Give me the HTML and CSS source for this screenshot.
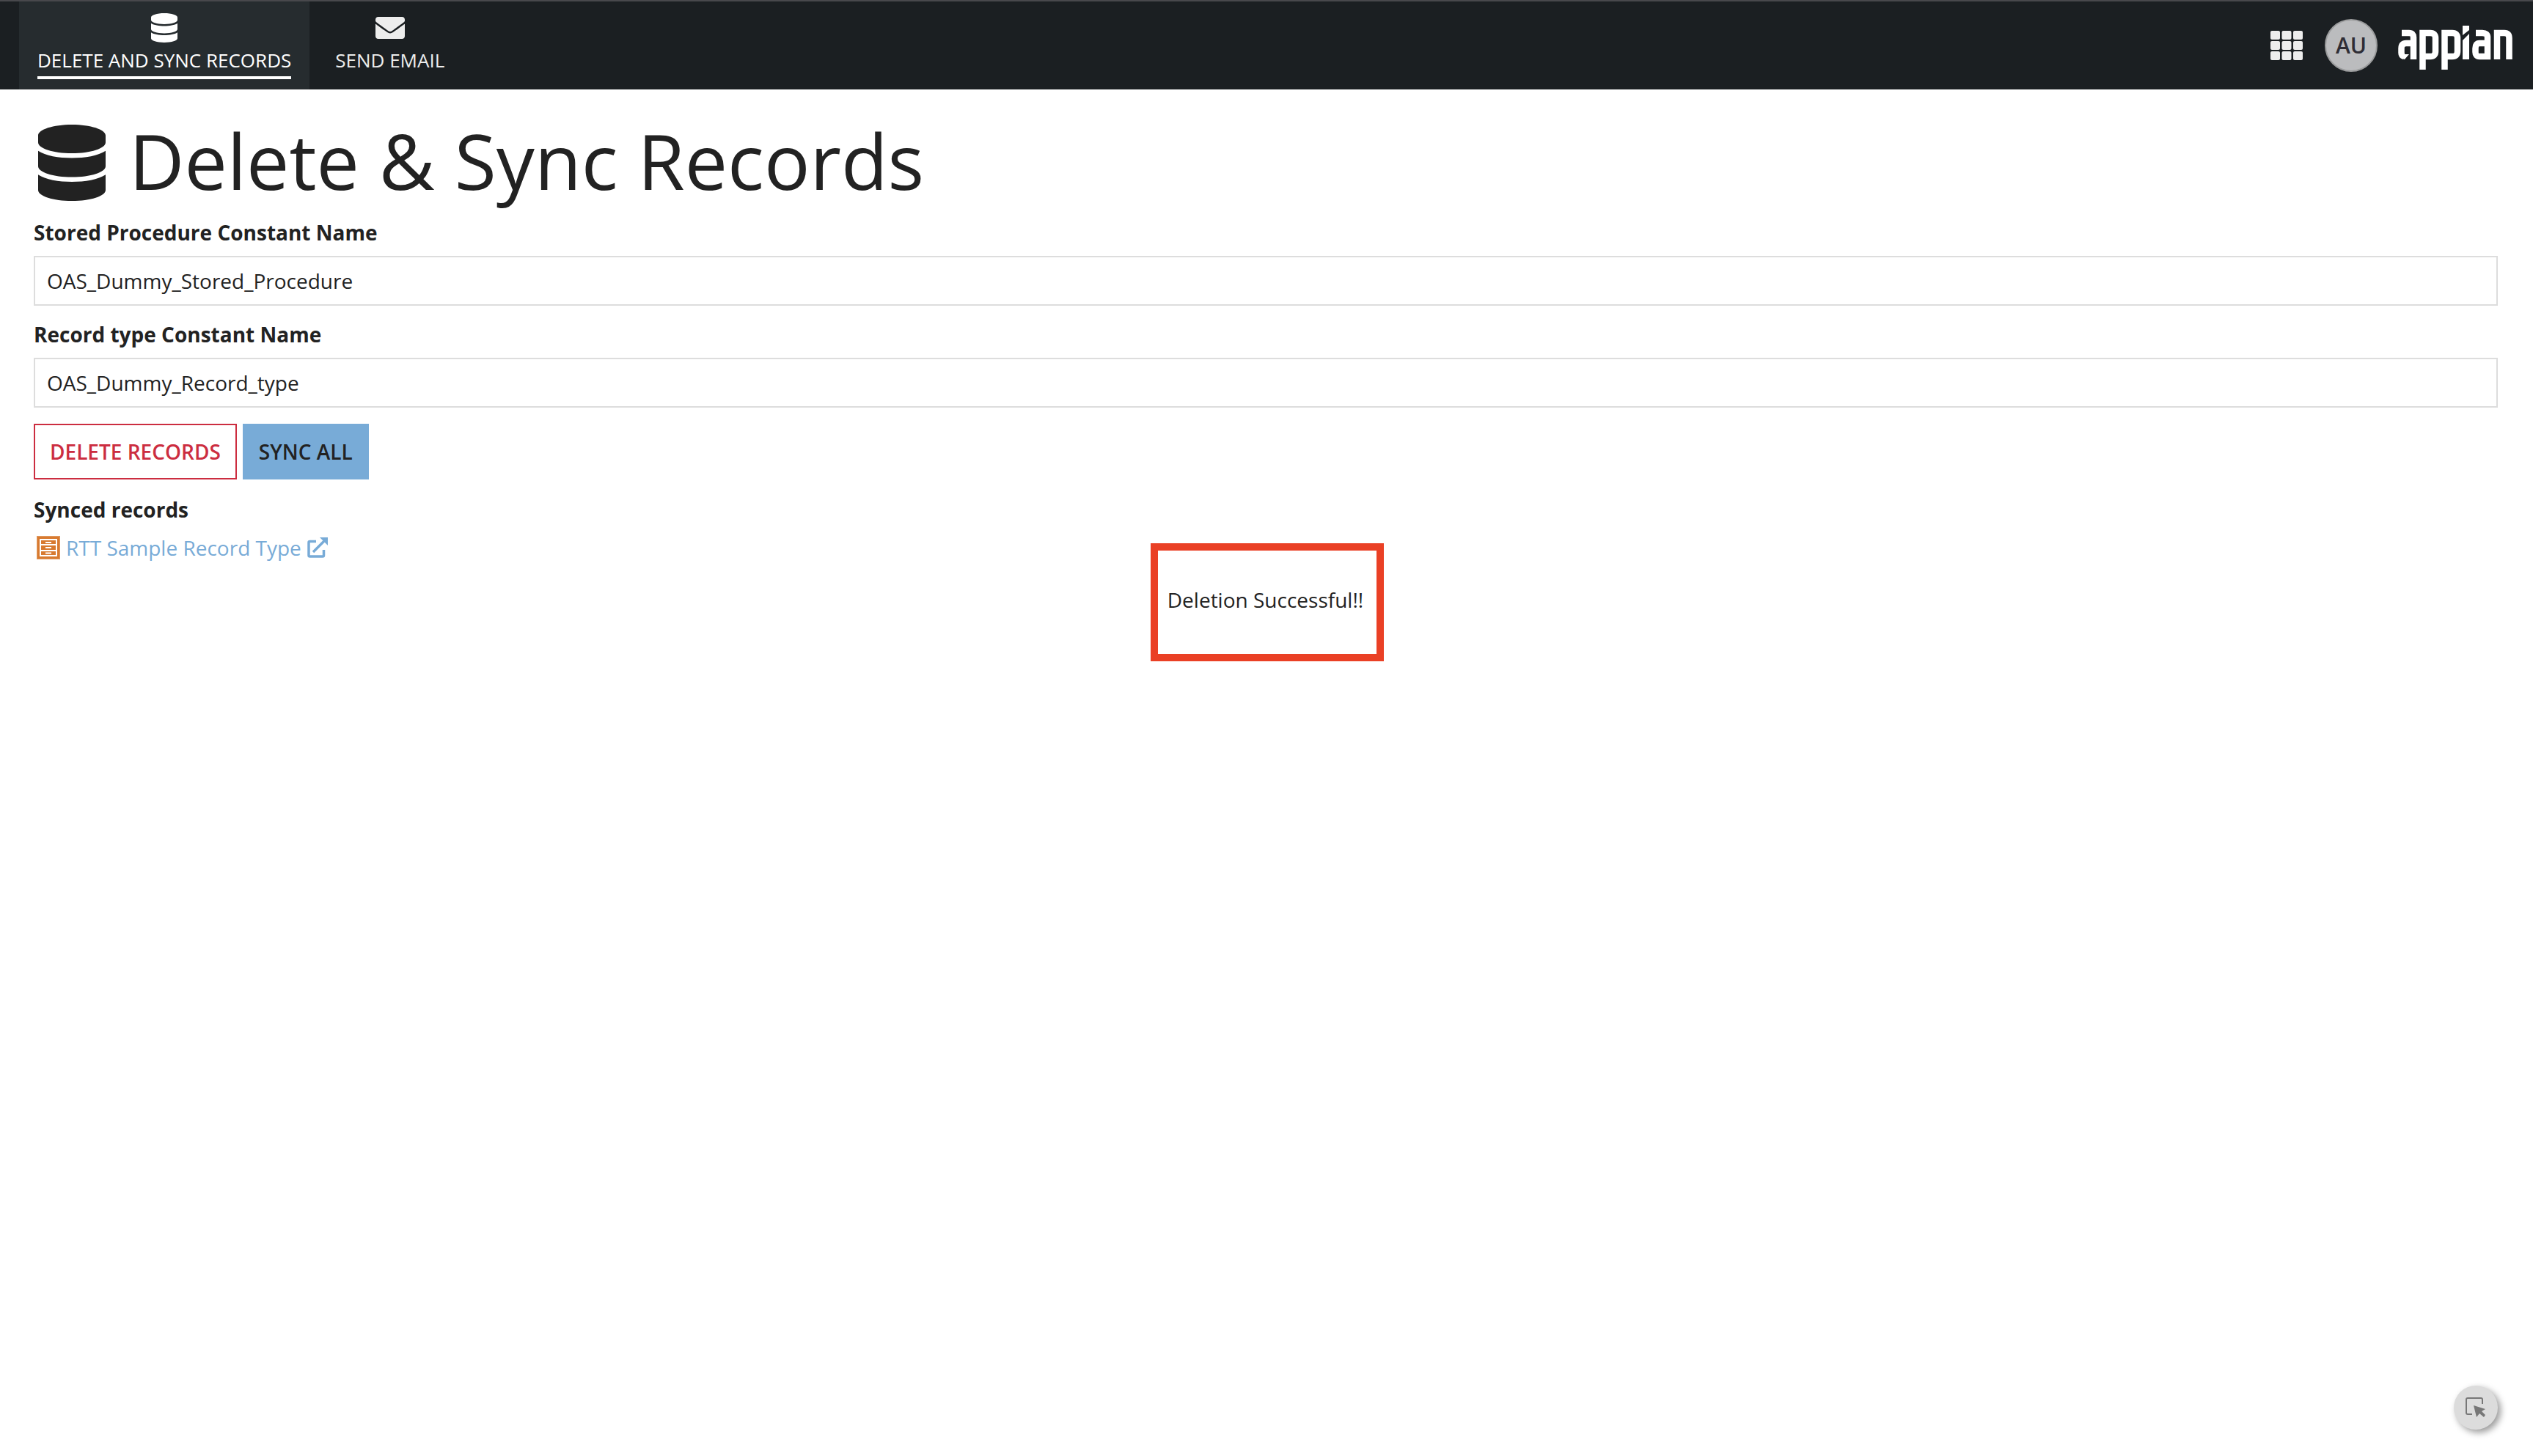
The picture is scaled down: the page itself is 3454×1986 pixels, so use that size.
FILE: index.html
```html
<!DOCTYPE html>
<html lang="en">
<head>
<meta charset="utf-8">
<title>Delete &amp; Sync Records</title>
<link rel="stylesheet" href="styles.css">
</head>
<body>
<header class="topbar">
  <nav class="tabs">
    <a class="tab tab-active" href="#">
      <span class="tab-icon"><svg width="36" height="40" viewBox="0 0 448 512" preserveAspectRatio="none"><path d="M448 73v46c0 40-100 73-224 73S0 159 0 119V73C0 33 100 0 224 0s224 33 224 73zm0 103v103c0 40-100 73-224 73S0 319 0 279V176c48 33 136 48 224 48s176-15 224-48zm0 160v103c0 40-100 73-224 73S0 479 0 439V336c48 33 136 48 224 48s176-15 224-48z"/></svg></span>
      <span class="tab-label">DELETE AND SYNC RECORDS</span>
    </a>
    <a class="tab" href="#">
      <span class="tab-icon"><svg width="40" height="30" viewBox="0 64 512 384"><path d="M502 191c4-3 10 0 10 5v204c0 27-21 48-48 48H48c-27 0-48-21-48-48V196c0-5 6-8 10-5 22 17 52 40 155 114 21 15 57 48 91 48s71-34 91-48c103-75 133-97 155-114zM256 320c23 0 57-30 74-42 133-96 143-105 173-129 6-4 9-11 9-19v-18c0-27-21-48-48-48H48c-27 0-48 21-48 48v18c0 8 3 14 9 19 30 24 40 33 173 129 17 12 51 42 74 42z"/></svg></span>
      <span class="tab-label">SEND EMAIL</span>
    </a>
  </nav>
  <div class="tools">
    <button class="apps" type="button" aria-label="Applications"><svg width="44" height="40" viewBox="0 0 44 40"><g><rect width="13" height="12" rx="2"/><rect x="15.500" width="13" height="12" rx="2"/><rect x="31" width="13" height="12" rx="2"/><rect y="14" width="13" height="12" rx="2"/><rect x="15.500" y="14" width="13" height="12" rx="2"/><rect x="31" y="14" width="13" height="12" rx="2"/><rect y="28" width="13" height="12" rx="2"/><rect x="15.500" y="28" width="13" height="12" rx="2"/><rect x="31" y="28" width="13" height="12" rx="2"/></g></svg></button>
    <button class="avatar" type="button">AU</button>
    <svg class="logo" role="img" aria-label="appian" width="156" height="60" viewBox="0 0 156 60"><g fill="none" stroke="#fff" stroke-width="8.500"><path d="M5 10H15Q21 10 21 16V46M21 24H11Q4.500 24 4.500 31V37Q4.500 41 8 42"/><path d="M33.500 60V10H44Q51 10 51 17V35Q51 42 44 42H34"/><path d="M63.500 60V10H74Q81 10 81 17V35Q81 42 74 42H64"/><path d="M106 10H115Q122 10 122 16V42H111Q105.500 42 105.500 36V31Q105.500 24 111 24H122"/><path d="M135 46V10H145Q151.500 10 151.500 17V46"/></g><path fill="#fff" d="M88 0H97V6L88 13ZM88 20L97 11V46H88ZM6 39H15L9 46Q5 45 4 42Z"/></svg>
  </div>
</header>
<main class="page">
  <h1 class="title"><svg width="92" height="104" viewBox="0 0 448 512" preserveAspectRatio="none"><path d="M448 73v46c0 40-100 73-224 73S0 159 0 119V73C0 33 100 0 224 0s224 33 224 73zm0 103v103c0 40-100 73-224 73S0 319 0 279V176c48 33 136 48 224 48s176-15 224-48zm0 160v103c0 40-100 73-224 73S0 479 0 439V336c48 33 136 48 224 48s176-15 224-48z"/></svg><span class="title-text">Delete &amp; Sync Records</span></h1>
  <div class="field">
    <label class="label" for="procedure">Stored Procedure Constant Name</label>
    <input class="input" id="procedure" type="text" value="OAS_Dummy_Stored_Procedure">
  </div>
  <div class="field">
    <label class="label" for="record-type">Record type Constant Name</label>
    <input class="input" id="record-type" type="text" value="OAS_Dummy_Record_type">
  </div>
  <div class="actions">
    <button class="button button-danger" type="button">DELETE RECORDS</button>
    <button class="button button-primary" type="button">SYNC ALL</button>
  </div>
  <section class="synced">
    <h2 class="label">Synced records</h2>
    <a class="record" href="#">
      <svg width="32" height="32" viewBox="0 0 32 32"><path fill="#d87a30" d="M0 0h32v32H0z"/><path fill="none" stroke="#e09a62" stroke-width="1" d="M.5 .5h31v31H.5z"/><g fill="none" stroke="#fff" stroke-width="2"><path d="M5 5h22v22H5zM5 12h22M5 20h22M12 9h8M12 16h8M12 23.500h8"/></g></svg>
      <span>RTT Sample Record Type</span>
      <svg width="28" height="28" viewBox="0 0 28 28"><path fill="none" stroke="#78abd7" stroke-width="3.500" d="M12 5.500H3.500Q2 5.500 2 7V24.500Q2 26 3.500 26H21Q22.500 26 22.500 24.500V17M8 20L23 5"/><path fill="#78abd7" d="M17 0H28V11Z"/></svg>
    </a>
  </section>
  <div class="notice-row">
    <p class="notice">Deletion Successful!!</p>
  </div>
</main>
<button class="picker" type="button" aria-label="Select element"><svg width="28" height="28" viewBox="0 0 28 28"><path fill="none" stroke="#777" stroke-width="2" d="M9 23H3Q1 23 1 21V3Q1 1 3 1H21Q23 1 23 3V9"/><path fill="#777" d="M11 11L27 16L22 19L27 24L25 27L19 22L15 27Z"/></svg></button>
</body>
</html>
```
FILE: styles.css
```css
* { box-sizing: border-box; }

body {
  margin: 0;
  min-height: 100vh;
  background: #fff;
  color: #222;
  font: 28px/36px "Open Sans", "Noto Sans", sans-serif;
}

button, input { font: inherit; color: inherit; }
svg { display: block; flex: none; }

.topbar {
  display: flex;
  justify-content: space-between;
  padding: 0 28px 0 26px;
  border-top: 2px solid #48484c;
  background: #1b1f22;
}
.tabs { display: flex; }
.tab {
  display: flex;
  flex-direction: column;
  align-items: center;
  padding: 16px 25px 14px;
  color: #ededed;
  fill: #ededed;
  font-size: 26px;
  text-decoration: none;
}
.tab + .tab { margin-left: 10px; }
.tab-active {
  background: #262c2f;
  color: #fff;
  fill: #fff;
}
.tab-icon {
  display: flex;
  align-items: center;
  height: 40px;
}
.tab-label {
  padding: 6px 0 4px;
  border-bottom: 4px solid transparent;
}
.tab-active .tab-label { border-color: #fff; }
.tools {
  display: flex;
  align-items: center;
}
.apps {
  padding: 0;
  border: 0;
  background: none;
  fill: #ededed;
}
.avatar {
  width: 72px;
  height: 72px;
  margin: 0 28px 0 30px;
  padding: 0;
  border: 2px solid #9b9c9d;
  border-radius: 50%;
  background: #bbbcbe;
  color: #2e2d35;
  font-size: 30px;
  font-weight: 600;
}
.logo { margin-top: 6px; }

.page { padding: 32px 48px 0 46px; }
.title {
  display: flex;
  align-items: center;
  gap: 32px;
  margin: 0;
  padding-left: 6px;
  fill: #222;
  font-size: 104px;
  font-weight: 400;
  line-height: 136px;
}
.title-text {
  padding-bottom: 6px;
  line-height: 130px;
}
.field { margin-bottom: 12px; }
.label {
  display: block;
  margin: 0;
  padding: 9px 0 14px;
  font-size: 28px;
  font-weight: 700;
  line-height: 36px;
}
.input {
  display: block;
  width: 100%;
  height: 68px;
  padding: 0 16px;
  border: 2px solid #ddd;
  background: #fff;
}
.actions {
  display: flex;
  gap: 8px;
  margin-top: 22px;
}
.button {
  height: 76px;
  padding: 0 20px;
  border: 2px solid;
  font-weight: 600;
}
.button-danger {
  border-color: #cc2d40;
  background: #fff;
  color: #cc2d40;
}
.button-primary {
  border-color: #78abd7;
  background: #78abd7;
}
.synced { padding-top: 14px; }
.record {
  display: flex;
  align-items: center;
  gap: 8px;
  width: fit-content;
  padding-left: 4px;
  color: #78abd7;
  line-height: 40px;
  text-decoration: none;
}
.notice-row {
  display: flex;
  justify-content: center;
  margin-top: -26px;
  padding-left: 4px;
}
.notice {
  margin: 0;
  padding: 49px 18px 56px 13px;
  border: 10px solid #ea4025;
}

.picker {
  position: fixed;
  right: 48px;
  bottom: 36px;
  display: grid;
  place-items: center;
  width: 60px;
  height: 60px;
  padding: 0;
  border: 0;
  border-radius: 50%;
  background: #dcdcdc;
  box-shadow: 4px 4px 10px rgba(0, 0, 0, 0.4);
}
```
